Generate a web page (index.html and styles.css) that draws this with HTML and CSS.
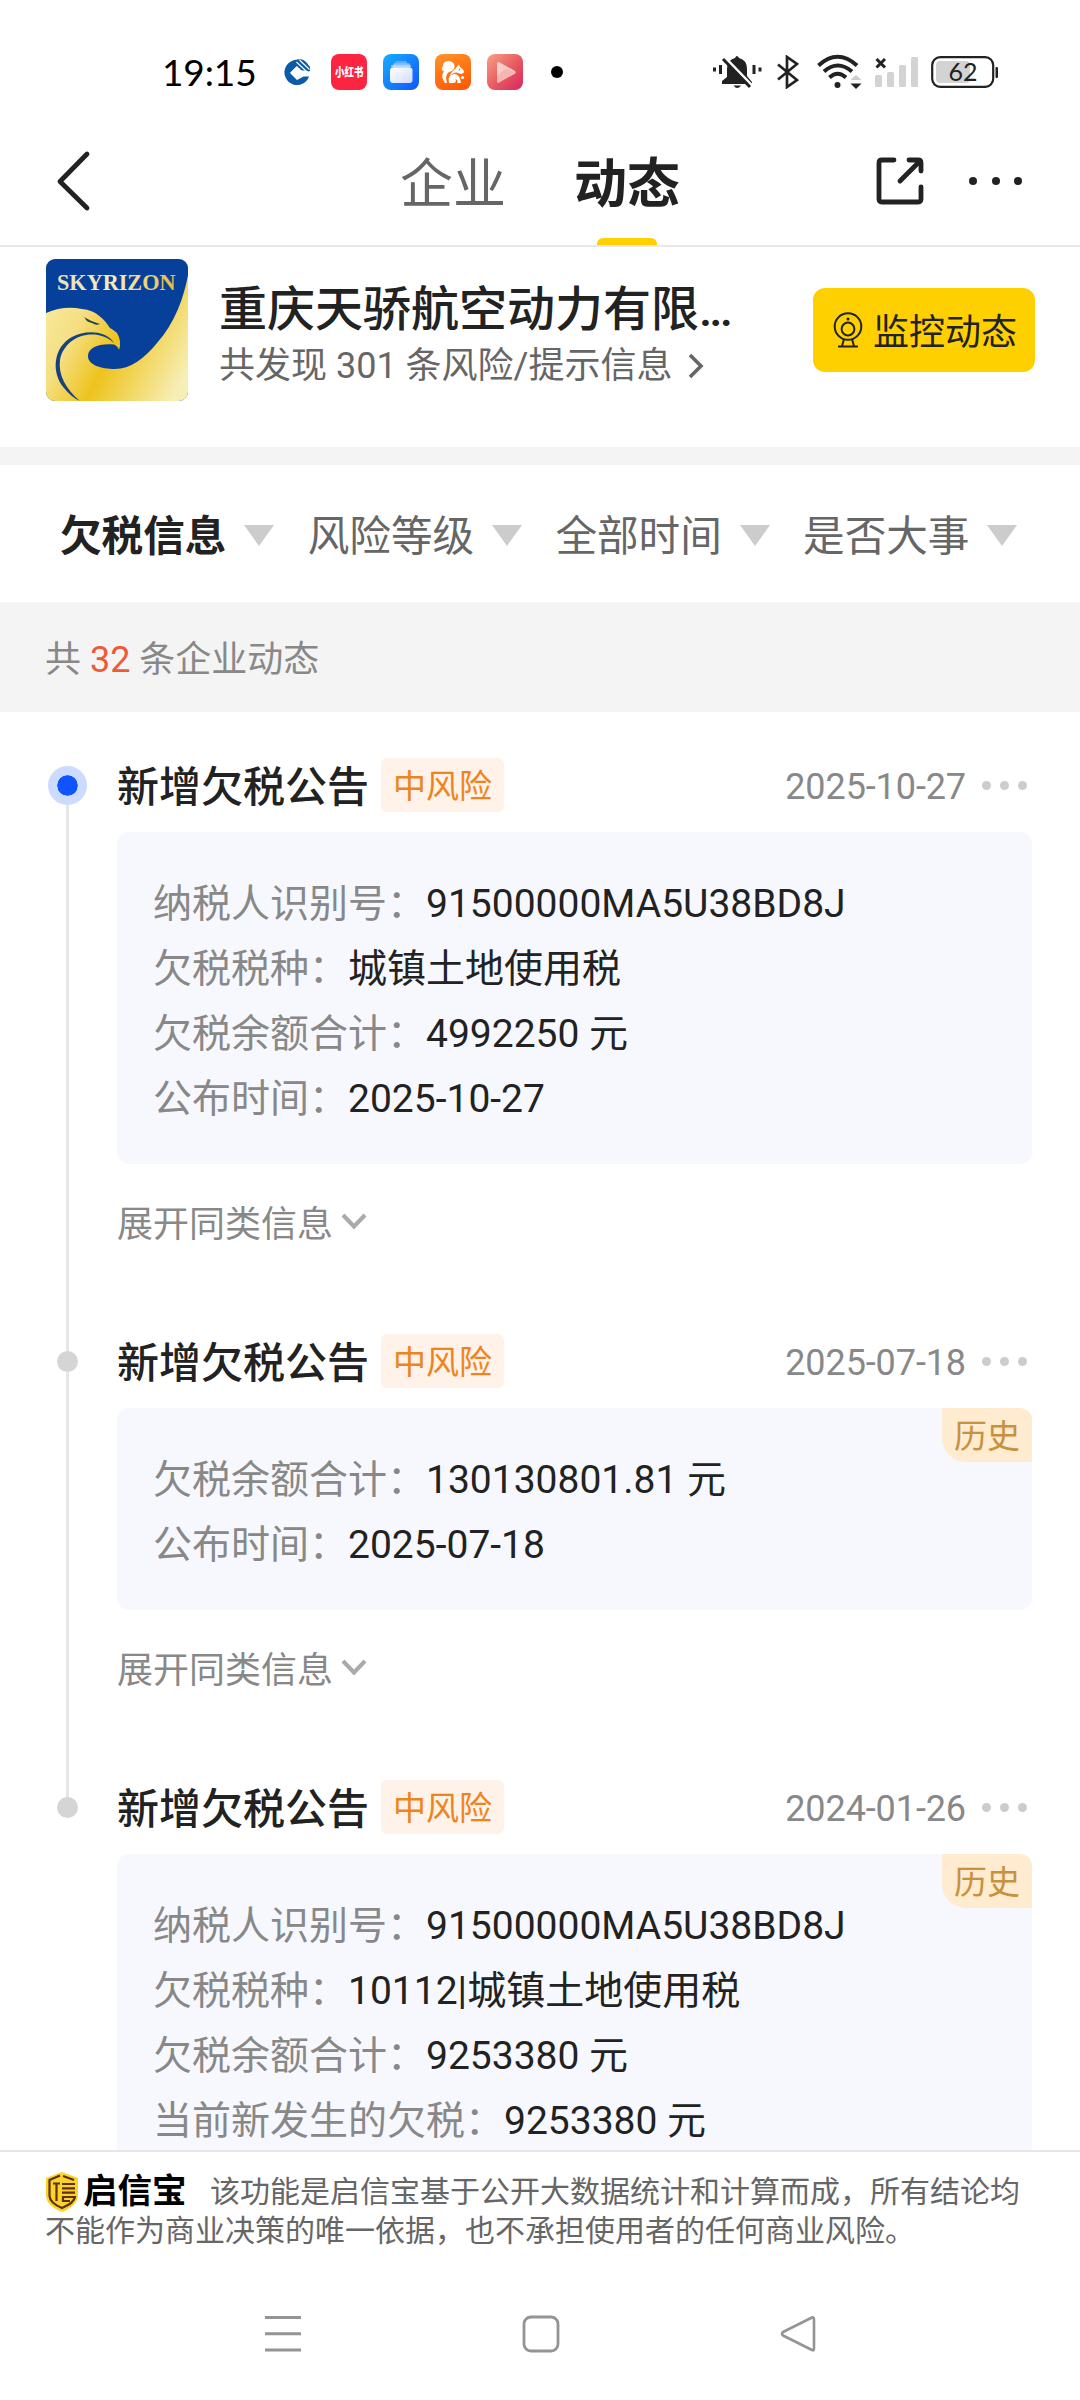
FILE: index.html
```html
<!DOCTYPE html>
<html lang="zh-CN">
<head>
<meta charset="utf-8">
<title>企业动态</title>
<link rel="stylesheet" href="styles.css">
</head>
<body>
<div class="status">
  <span class="clock">19:15</span>
  <svg class="app-ccb" width="26" height="28" viewBox="0 0 26 28">
    <path d="M17 2.500A12.600 12.600 0 1 0 25 18.500H19.500L13 22L6 15L12.500 8.500L17 12.500H23Z" fill="#0a5ba8"/>
    <path d="M13 1.500Q19 0 22.500 4.500L26 9V13L24 13.500L12.500 3.500Z" fill="#0a5ba8"/>
    <path d="M12.500 4L22 13M15.500 2L25.500 11.500" stroke="#fff" stroke-width="1.100"/>
    <path d="M13 8L19.500 14.500L13 21L6.500 14.500Z" fill="#fff"/>
  </svg>
  <div class="apps">
    <svg width="36" height="36" viewBox="0 0 36 36">
      <rect width="36" height="36" rx="8" fill="#fd2442"/>
      <text x="4" y="22.800" textLength="28.500" lengthAdjust="spacingAndGlyphs" class="red-text">小红书</text>
    </svg>
    <svg width="36" height="36" viewBox="0 0 36 36">
      <defs>
        <linearGradient id="blue" x1="0" y1="0" x2="1" y2="1"><stop offset="0" stop-color="#17adff"/><stop offset="1" stop-color="#1157fb"/></linearGradient>
        <linearGradient id="paper" x1="0" y1="0" x2="1" y2="1"><stop offset="0" stop-color="#fff"/><stop offset="1" stop-color="#cfdcff"/></linearGradient>
      </defs>
      <rect width="36" height="36" rx="8" fill="url(#blue)"/>
      <rect x="12" y="7" width="12" height="6" rx="1.500" fill="#5aaeff"/>
      <rect x="10" y="9.200" width="17" height="6" rx="1.500" fill="#86c0ff"/>
      <rect x="8" y="11.200" width="20" height="2" rx="1" fill="#b4d6ff"/>
      <rect x="7" y="13.600" width="22.500" height="15.400" rx="3" fill="url(#paper)"/>
    </svg>
    <svg width="36" height="36" viewBox="0 0 36 36">
      <defs><linearGradient id="orange" x1="0.200" y1="0" x2="0.600" y2="1"><stop offset="0" stop-color="#ff9125"/><stop offset="1" stop-color="#ff5a05"/></linearGradient></defs>
      <rect width="36" height="36" rx="8" fill="url(#orange)"/>
      <path d="M10 29Q5 22 9 17.500Q5 15.500 8 12Q8 7 14 7Q20 8 19.500 13Q19 17 14 18Q9.500 21 12 29Z" fill="#fff"/>
      <path d="M14.500 22Q16 18 20 15L24 10.500L25 13L28.500 16Q30 19.500 26 20L21.500 18.500Q18 18 14.500 22Z" fill="#fff"/>
      <path d="M14 29Q12 21 19 20Q25 20 26 29H22Q23.500 26 20.500 25Q22 29 18 29Z" fill="#fff"/>
      <circle cx="27.500" cy="23.500" r="1.600" fill="#fff"/>
      <circle cx="24.500" cy="15.500" r="0.900" fill="#ff7b18"/>
    </svg>
    <svg width="36" height="36" viewBox="0 0 36 36">
      <defs><linearGradient id="rose" x1="0" y1="0" x2="1" y2="1"><stop offset="0" stop-color="#f8a286"/><stop offset="0.500" stop-color="#e85e62"/><stop offset="1" stop-color="#da245e"/></linearGradient></defs>
      <rect width="36" height="36" rx="8" fill="url(#rose)"/>
      <path d="M12 8L28 17Q29.500 18.300 28 19.500L12 28.500Q10 29 10 27V9.500Q10 7.500 12 8Z" fill="#f8ccc6"/>
      <path d="M10 22L18 15L28.500 18L12 28.500Q10 29 10 27Z" fill="#f5b5b0"/>
    </svg>
  </div>
  <i class="more-dot"></i>
  <svg class="bell" width="49" height="36" viewBox="0 0 49 36" fill="#222">
    <path d="M9 30V27L14 23V15Q14 6 22 4Q24 0 26 4Q34 6 34 15V22L39 28V30Z"/>
    <path d="M20.500 31.500H28Q24.300 36.500 20.500 31.500Z"/>
    <path d="M12 3.500L39 31.500" stroke="#fff" stroke-width="2.600"/>
    <path d="M10 5L37 33" stroke="#222" stroke-width="3"/>
    <path d="M0 13.500h3v4h-3zM6 11h3v9h-3zM39.500 11h3v9h-3zM45.500 13.500h3v4h-3z"/>
  </svg>
  <svg class="bt" width="22" height="34" viewBox="0 0 22 34" fill="none" stroke="#222" stroke-width="2.700">
    <path d="M1 9.500L20 25L10 32V2L20 9L1 24.500"/>
  </svg>
  <svg class="wifi" width="46" height="36" viewBox="0 0 46 36" fill="none" stroke="#222" stroke-width="4">
    <path d="M1.500 11.500Q20.500 -6 40 11.500"/><path d="M7 17.500Q20.500 5.500 35 17.500"/><path d="M12.500 23.500Q20.500 16 29 23.500"/>
    <circle cx="20.500" cy="31" r="3" fill="#222" stroke="none"/>
    <path d="M33.500 26L39 21L44.500 26Z" fill="#ccc" stroke="none"/><path d="M33.500 29.500H44.500L39 35Z" fill="#222" stroke="none"/>
  </svg>
  <svg class="signal" width="44" height="36" viewBox="0 0 44 36">
    <path d="M1.500 5L10 13.500M10 5L1.500 13.500" stroke="#222" stroke-width="3"/>
    <g fill="#d3d3d3"><rect x="0" y="21" width="7" height="12" rx="1.500"/><rect x="12" y="18" width="7" height="15" rx="1.500"/><rect x="24" y="11" width="7" height="22" rx="1.500"/><rect x="36" y="3" width="7" height="30" rx="1.500"/></g>
  </svg>
  <svg class="battery" width="68" height="32" viewBox="0 0 68 32">
    <rect x="5" y="5" width="34" height="22" rx="4" fill="#d3d3d3"/>
    <rect x="1.200" y="1.200" width="61" height="29.600" rx="8" fill="none" stroke="#222" stroke-width="2.200"/>
    <rect x="64.500" y="11" width="2.500" height="11" rx="1" fill="#222"/>
    <text x="17.500" y="24.500" class="battery-text">62</text>
  </svg>
</div>

<header class="header">
  <svg class="back" width="36" height="62" viewBox="0 0 36 62" fill="none" stroke="#222" stroke-width="4.800" stroke-linecap="round" stroke-linejoin="round"><path d="M32 4L5 31.500L32 58"/></svg>
  <nav class="tabs"><span class="tab">企业</span><span class="tab active">动态</span></nav>
  <svg class="share" width="48" height="48" viewBox="0 0 48 48" fill="none" stroke="#222" stroke-width="4.800" stroke-linecap="round" stroke-linejoin="round">
    <path d="M18 3H6Q3 3 3 6V42Q3 45 6 45H42Q45 45 45 42V30"/><path d="M33 3H42Q45 3 45 6V14M44 4L24 24"/>
  </svg>
  <div class="dots dark"><i></i><i></i><i></i></div>
</header>

<section class="company">
  <svg class="logo" width="142" height="142" viewBox="0 0 142 142">
    <defs>
      <linearGradient id="gold" x1="0" y1="0.300" x2="1" y2="0.750">
        <stop offset="0" stop-color="#f8e89a"/><stop offset="0.220" stop-color="#f5df82"/><stop offset="0.500" stop-color="#eec31c"/><stop offset="0.750" stop-color="#f2d968"/><stop offset="1" stop-color="#f7eeb6"/>
      </linearGradient>
      <linearGradient id="letters"><stop offset="0" stop-color="#e6e2c0"/><stop offset="0.500" stop-color="#f8edba"/><stop offset="1" stop-color="#e5ba3c"/></linearGradient>
    </defs>
    <rect width="142" height="142" fill="#07409b"/>
    <path d="M142 16C138 38 129 64 111 84C98 100 84 110 69 110C55 110 42 106 42 97C42 88 54 84 68 85.500Q72 87 73 91Q76 82 71 74Q68 71 64 69C59 61 50 51 36 50Q18 46 0 54V142H142Z" fill="url(#gold)"/>
    <path d="M68 84C60 71 39 71 26 78C7 88 5 114 18 129Q25 138 34 142C20 130 12 116 14 101C17 84 34 73 52 76Q62 78 68 84Z" fill="#16427f"/>
    <path d="M36 57Q44 62 54 65Q50 67 46 64Q40 63 39 59Z" fill="#26415a"/>
    <text x="11" y="31" textLength="118.500" lengthAdjust="spacingAndGlyphs" class="logo-text">SKYRIZON</text>
  </svg>
  <div class="company-info">
    <h1>重庆天骄航空动力有限<span class="ellipsis">...</span></h1>
    <p>共发现 301 条风险/提示信息<svg width="16" height="26" viewBox="0 0 16 26" fill="none" stroke="#666" stroke-width="3.600"><path d="M2 2L13 13L2 24"/></svg></p>
  </div>
  <button class="monitor">
    <svg width="30" height="36" viewBox="0 0 30 36" fill="none" stroke="#222" stroke-width="2">
      <circle cx="15" cy="14.500" r="13.300"/><circle cx="15" cy="17" r="6.400"/><circle cx="15" cy="7" r="1.500" fill="#222" stroke="none"/><path d="M11 27L9 34M19 27L21 34M5 34.500H25"/>
    </svg>
    <span>监控动态</span>
  </button>
</section>

<div class="filters">
  <div class="filter on"><span>欠税信息</span><i></i></div>
  <div class="filter"><span>风险等级</span><i></i></div>
  <div class="filter"><span>全部时间</span><i></i></div>
  <div class="filter"><span>是否大事</span><i></i></div>
</div>
<div class="count">共 <em>32</em> 条企业动态</div>

<main class="timeline">
  <article class="item first">
    <div class="rail"><i class="dot"></i><i class="line"></i></div>
    <div class="content">
      <div class="head"><h2>新增欠税公告</h2><span class="risk">中风险</span><time>2025-10-27</time><div class="dots"><i></i><i></i><i></i></div></div>
      <dl class="card">
        <div><dt>纳税人识别号：</dt><dd>91500000MA5U38BD8J</dd></div>
        <div><dt>欠税税种：</dt><dd>城镇土地使用税</dd></div>
        <div><dt>欠税余额合计：</dt><dd>4992250 元</dd></div>
        <div><dt>公布时间：</dt><dd>2025-10-27</dd></div>
      </dl>
      <div class="expand">展开同类信息<svg width="26" height="18" viewBox="0 0 26 18" fill="none" stroke="#aaa" stroke-width="4"><path d="M2 2L13 13.500L24 2"/></svg></div>
    </div>
  </article>
  <article class="item">
    <div class="rail"><i class="lead"></i><i class="dot"></i><i class="line"></i></div>
    <div class="content">
      <div class="head"><h2>新增欠税公告</h2><span class="risk">中风险</span><time>2025-07-18</time><div class="dots"><i></i><i></i><i></i></div></div>
      <dl class="card">
        <span class="history">历史</span>
        <div><dt>欠税余额合计：</dt><dd>130130801.81 元</dd></div>
        <div><dt>公布时间：</dt><dd>2025-07-18</dd></div>
      </dl>
      <div class="expand">展开同类信息<svg width="26" height="18" viewBox="0 0 26 18" fill="none" stroke="#aaa" stroke-width="4"><path d="M2 2L13 13.500L24 2"/></svg></div>
    </div>
  </article>
  <article class="item">
    <div class="rail"><i class="lead"></i><i class="dot"></i></div>
    <div class="content">
      <div class="head"><h2>新增欠税公告</h2><span class="risk">中风险</span><time>2024-01-26</time><div class="dots"><i></i><i></i><i></i></div></div>
      <dl class="card">
        <span class="history">历史</span>
        <div><dt>纳税人识别号：</dt><dd>91500000MA5U38BD8J</dd></div>
        <div><dt>欠税税种：</dt><dd>10112|城镇土地使用税</dd></div>
        <div><dt>欠税余额合计：</dt><dd>9253380 元</dd></div>
        <div><dt>当前新发生的欠税：</dt><dd>9253380 元</dd></div>
      </dl>
    </div>
  </article>
</main>

<footer class="disclaimer">
  <span class="brand">
    <svg width="34" height="40" viewBox="0 0 34 40">
      <path d="M17 0L33 6V24Q32 34 17 40Q2 34 1 24V6Z" fill="#fbd12b"/>
      <g fill="none" stroke="#5d3208" stroke-width="2.200"><path d="M15 3.500L4.500 8V24Q5 31 17 36Q29 31 30 25H18V29H25"/><path d="M8 11.500H15M11.500 11.500V29M18 4L29 8M17 12H30M17 16.300H30M17 20.600H30"/></g>
    </svg>
    <b>启信宝</b>
  </span>该功能是启信宝基于公开大数据统计和计算而成，所有结论均不能作为商业决策的唯一依据，也不承担使用者的任何商业风险。
</footer>
<nav class="system">
  <svg width="36" height="38" viewBox="0 0 36 38" stroke="#949494" stroke-width="3"><path d="M0 2.500H36M0 18.700H36M0 35H36"/></svg>
  <svg width="38" height="38" viewBox="0 0 38 38" fill="none" stroke="#949494" stroke-width="2.800"><rect x="2" y="2" width="34" height="34" rx="7"/></svg>
  <svg width="36" height="38" viewBox="0 0 36 38" fill="none" stroke="#949494" stroke-width="2.600" stroke-linejoin="round"><path d="M32 2.500Q34 2 34 4.500V33.500Q34 36 32 35L3 20.500Q1 18.700 3 17Z"/></svg>
</nav>
</body>
</html>
```
FILE: styles.css
```css
* { box-sizing: border-box; margin: 0; padding: 0; }
body {
  width: 1080px; height: 2400px; overflow: hidden;
  display: flex; flex-direction: column;
  background: #fff; color: #222;
  font-family: Roboto, "Noto Sans CJK SC", sans-serif;
}
i, em { font-style: normal; display: block; }
svg { display: block; flex: none; }

.status { height: 116px; padding: 28px 0 0 162px; display: flex; align-items: center; flex: none; }
.clock { width: 122px; font: 37px/40px Lato, sans-serif; color: #000; letter-spacing: -0.1px; }
.apps { display: flex; gap: 16px; margin-left: 21px; }
.red-text { font: 900 12.500px "Noto Sans CJK SC", sans-serif; fill: #fff; }
.more-dot { width: 12px; height: 12px; border-radius: 50%; background: #000; margin-left: 28px; }
.bell { margin-left: 150px; }
.bt { margin-left: 15px; }
.wifi { margin-left: 18px; }
.signal { margin-left: 12px; }
.battery { margin-left: 12px; }
.battery-text { font: 25px Lato, sans-serif; fill: #222; }

.header { height: 131px; border-bottom: 2px solid #e8e8e8; display: flex; align-items: stretch; flex: none; }
.back { margin: 34px 0 0 55px; }
.tabs { display: flex; gap: 68px; margin-left: 309px; }
.tab { font-size: 53px; line-height: 80px; padding-top: 29px; height: 129px; color: #666; }
.tab.active { color: #222; font-weight: 700; display: flex; flex-direction: column; align-items: center; justify-content: space-between; }
.tab.active::after { content: ""; width: 60px; height: 7px; border-radius: 6px 6px 0 0; background: #ffd000; }
.share { margin: 41px 0 0 196px; }
.dots { display: flex; gap: 9px; }
.dots i { width: 9px; height: 9px; border-radius: 50%; background: #ccc; }
.dots.dark { gap: 14.500px; margin: 61px 0 0 45px; }
.dots.dark i { width: 8px; height: 8px; background: #222; }

.company { height: 200px; padding: 12px 45px 0 46px; display: flex; align-items: flex-start; flex: none; }
.logo { border-radius: 9px; }
.logo-text { font: bold 24px "Liberation Serif", serif; fill: url(#letters); }
.company-info { margin-left: 31px; width: 594px; padding-top: 19px; }
.company-info h1 { font-size: 48px; font-weight: 500; line-height: 64px; white-space: nowrap; }
.ellipsis { letter-spacing: -3px; }
.company-info p { display: flex; align-items: center; font-size: 36px; line-height: 48px; color: #666; white-space: nowrap; gap: 16px; }
.monitor { margin-top: 29px; width: 222px; height: 84px; border: 0; border-radius: 12px; background: #ffd000; display: flex; align-items: center; padding-left: 20px; gap: 10px; font: 36px/48px Roboto, "Noto Sans CJK SC", sans-serif; color: #222; }
.monitor span { padding-top: 5px; }

.filters { height: 155px; border-top: 18px solid #f4f4f4; padding: 0 0 0 60px; display: grid; grid-template-columns: repeat(4, 247.700px); align-items: center; flex: none; }
.filter { display: flex; align-items: center; gap: 18px; font-size: 41.600px; line-height: 60px; color: #666; white-space: nowrap; }
.filter span { padding-top: 6px; }
.filter.on { color: #222; font-weight: 700; }
.filter i { margin-top: 3px; border: 15px solid transparent; border-top: 21px solid #ccc; border-bottom: 0; }
.count { height: 110px; padding: 3px 0 0 45px; background: #f4f4f4; font-size: 36px; line-height: 110px; color: #888; flex: none; }
.count em { display: inline; color: #ee5a36; }

.timeline { flex: 1; min-height: 0; overflow: hidden; padding: 46px 48px 0; display: flex; flex-direction: column; }
.item { display: grid; grid-template-columns: 39px 1fr; column-gap: 30px; flex: none; }
.rail { display: flex; flex-direction: column; align-items: center; }
.lead { width: 3px; height: 17px; background: #e6e6e6; }
.line { width: 3px; flex: 1; background: #e6e6e6; }
.dot { width: 21px; height: 21px; border-radius: 50%; background: #d5d5d5; }
.first .rail { padding-top: 8px; }
.first .dot { width: 39px; height: 39px; border: 9px solid #ccdbff; background: #1054ff; background-clip: padding-box; }
.head { height: 54px; display: flex; align-items: center; }
.head h2 { padding-top: 6px; font-size: 42px; line-height: 54px; font-weight: 500; }
.risk { margin-left: 12px; height: 54px; padding: 2px 12px 0; border-radius: 6px; background: #fff2e8; color: #ee8420; font-size: 33px; line-height: 54px; }
.head time { margin-left: auto; padding-top: 3px; font-size: 36px; line-height: 54px; letter-spacing: -0.1px; color: #888; }
.head .dots { margin: 0 5px 0 16px; }
.card { position: relative; margin-top: 20px; padding: 40px 36px 32px; border-radius: 12px; background: #f7f8fd; font-size: 39px; line-height: 65px; }
.card div { display: flex; height: 65px; white-space: nowrap; }
.card dt { color: #888; }
.history { position: absolute; top: 0; right: 0; width: 90px; height: 54px; padding-top: 2px; border-radius: 0 12px 0 24px; background: #ffebd0; color: #c8913e; font-size: 33px; line-height: 54px; text-align: center; }
.expand { height: 170px; padding-top: 37px; display: flex; align-items: flex-start; gap: 8px; font-size: 36px; line-height: 48px; color: #888; }
.expand svg { margin-top: 12px; }

.disclaimer { height: 145px; border-top: 2px solid #e6e6e6; padding: 20px 45px 0; font-size: 30px; line-height: 39px; color: #666; flex: none; }
.brand { display: inline-flex; align-items: center; height: 39px; width: 165px; vertical-align: top; gap: 4px; color: #000; }
.brand b { font-size: 34.500px; line-height: 39px; font-weight: 700; }
.system { height: 105px; padding: 20px 264px 0 265px; display: flex; justify-content: space-between; align-items: flex-start; flex: none; }
```
